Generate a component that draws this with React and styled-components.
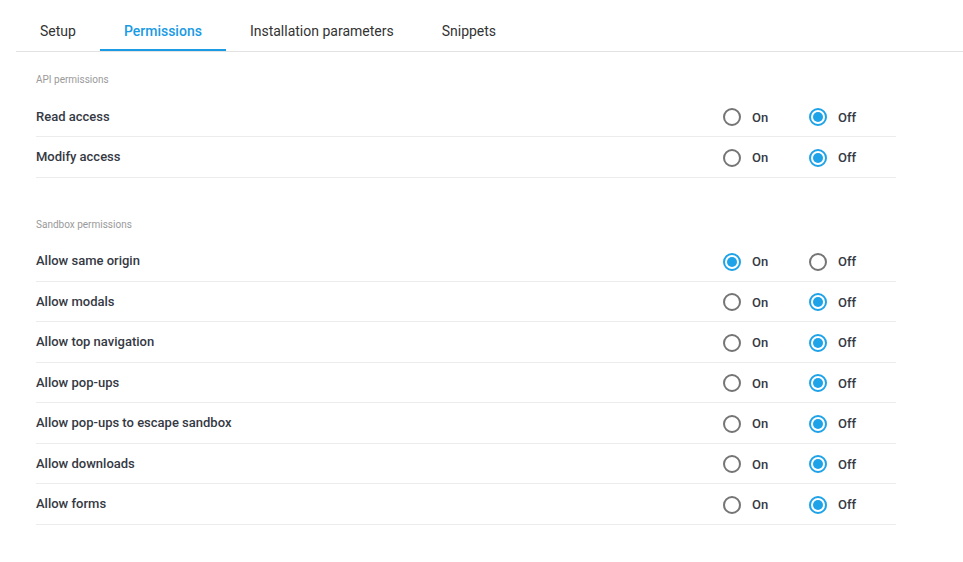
import React, { useState } from "react";
import styled, { createGlobalStyle } from "styled-components";

const Global = createGlobalStyle`
  html, body { margin: 0; padding: 0; background: #fff; }
  body { font-family: Roboto, "Noto Sans", "Liberation Sans", sans-serif; -webkit-font-smoothing: antialiased; }
`;

const Page = styled.div`
  padding-left: 16px;
`;

const TabBar = styled.div`
  display: flex;
  border-bottom: 1px solid #e2e2e2;
`;

const Tab = styled.button`
  appearance: none;
  background: none;
  border: 0;
  border-bottom: 2px solid ${(p) => (p.$active ? "#1b9be3" : "transparent")};
  padding: 21px 24px 8px;
  height: 51px;
  box-sizing: border-box;
  font-family: inherit;
  font-size: 14px;
  line-height: 20px;
  font-weight: ${(p) => (p.$active ? 500 : 400)};
  color: ${(p) => (p.$active ? "#1b9be3" : "#333")};
  cursor: pointer;
`;

const Content = styled.div`
  padding: 22px 67px 0 20px;
  display: flex;
  flex-direction: column;
  gap: 41px;
`;

const Section = styled.section`
  display: flex;
  flex-direction: column;
`;

const SectionLabel = styled.div`
  font-size: 10px;
  line-height: 12px;
  color: #9a9a9a;
  margin-bottom: 10.5px;
`;

const Row = styled.div`
  display: flex;
  align-items: center;
  justify-content: space-between;
  height: 40.5px;
  box-sizing: border-box;
  border-bottom: 1px solid #ececec;
`;

const RowLabel = styled.div`
  font-size: 13px;
  font-weight: 500;
  color: #353944;
`;

const Options = styled.div`
  display: flex;
  padding-top: 2px;
  margin-right: 1px;
`;

const Option = styled.label`
  display: flex;
  align-items: center;
  gap: 11px;
  width: 86px;
  cursor: pointer;
  font-size: 13px;
  font-weight: 500;
  color: #353944;
`;

const Ring = styled.span`
  width: 18px;
  height: 18px;
  box-sizing: border-box;
  border-radius: 50%;
  border: 2px solid ${(p) => (p.$checked ? "#1ea3e8" : "#757575")};
  display: flex;
  align-items: center;
  justify-content: center;
  &::after {
    content: "";
    width: 10px;
    height: 10px;
    border-radius: 50%;
    background: #1ea3e8;
    display: ${(p) => (p.$checked ? "block" : "none")};
  }
`;

const sections = [
  {
    title: "API permissions",
    rows: [
      ["Read access", false],
      ["Modify access", false],
    ],
  },
  {
    title: "Sandbox permissions",
    rows: [
      ["Allow same origin", true],
      ["Allow modals", false],
      ["Allow top navigation", false],
      ["Allow pop-ups", false],
      ["Allow pop-ups to escape sandbox", false],
      ["Allow downloads", false],
      ["Allow forms", false],
    ],
  },
];

function PermRow({ label, initial }) {
  const [on, setOn] = useState(initial);
  return (
    <Row>
      <RowLabel>{label}</RowLabel>
      <Options>
        <Option onClick={() => setOn(true)}>
          <Ring $checked={on} />
          On
        </Option>
        <Option onClick={() => setOn(false)}>
          <Ring $checked={!on} />
          Off
        </Option>
      </Options>
    </Row>
  );
}

export default function App() {
  const [tab, setTab] = useState("Permissions");
  const tabs = ["Setup", "Permissions", "Installation parameters", "Snippets"];
  return (
    <Page>
      <Global />
      <TabBar>
        {tabs.map((t) => (
          <Tab key={t} $active={t === tab} onClick={() => setTab(t)}>
            {t}
          </Tab>
        ))}
      </TabBar>
      <Content>
        {sections.map((s) => (
          <Section key={s.title}>
            <SectionLabel>{s.title}</SectionLabel>
            {s.rows.map(([l, v]) => (
              <PermRow key={l} label={l} initial={v} />
            ))}
          </Section>
        ))}
      </Content>
    </Page>
  );
}
